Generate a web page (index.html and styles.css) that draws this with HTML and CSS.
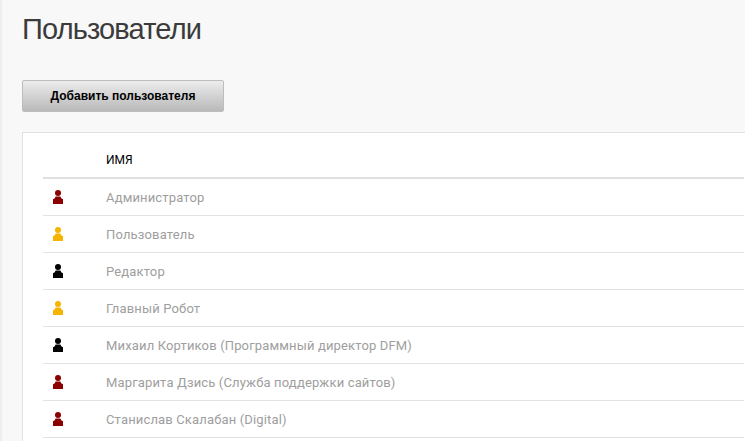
FILE: index.html
```html
<!DOCTYPE html>
<html lang="ru">
<head>
<meta charset="utf-8">
<title>Пользователи</title>
<link rel="stylesheet" href="styles.css">
</head>
<body>
<svg class="defs" width="0" height="0" aria-hidden="true"><defs>
<symbol id="user" viewBox="0 0 10 14"><circle cx="5" cy="3" r="3"/><path d="M2.6 6.6h4.8L8.2 8.2 10 9.2V14H0V9.2l1.8-1z"/></symbol>
</defs></svg>
<main class="page">
<h1 class="title">Пользователи</h1>
<button class="add" type="button">Добавить пользователя</button>
<section class="card">
<div class="head"><span class="icon-col"></span><span>ИМЯ</span></div>
<div class="row"><span class="icon-col"><svg class="user red"><use href="#user"/></svg></span><a class="name">Администратор</a></div>
<div class="row"><span class="icon-col"><svg class="user amber"><use href="#user"/></svg></span><a class="name">Пользователь</a></div>
<div class="row"><span class="icon-col"><svg class="user black"><use href="#user"/></svg></span><a class="name">Редактор</a></div>
<div class="row"><span class="icon-col"><svg class="user amber"><use href="#user"/></svg></span><a class="name">Главный Робот</a></div>
<div class="row"><span class="icon-col"><svg class="user black"><use href="#user"/></svg></span><a class="name">Михаил Кортиков (Программный директор DFM)</a></div>
<div class="row"><span class="icon-col"><svg class="user red"><use href="#user"/></svg></span><a class="name">Маргарита Дзись (Служба поддержки сайтов)</a></div>
<div class="row"><span class="icon-col"><svg class="user red"><use href="#user"/></svg></span><a class="name">Станислав Скалабан (Digital)</a></div>
</section>
</main>
</body>
</html>
```
FILE: styles.css
```css
html, body {
  margin: 0;
  height: 100%;
  overflow: hidden;
  background: #f8f8f8;
}
.defs { display: block; height: 0; }
.page {
  box-sizing: border-box;
  height: 441px;
  border-left: 2px solid #eeeeee;
  padding: 0 0 0 20px;
  overflow: hidden;
}
.title {
  margin: 0;
  padding-top: 13px;
  height: 80px;
  box-sizing: border-box;
  font: 400 29px/32px "Liberation Sans", Arial, sans-serif;
  letter-spacing: -0.85px;
  color: #3b3b3b;
}
.add {
  display: block;
  box-sizing: border-box;
  width: 202px;
  height: 32px;
  padding: 0;
  border: 1px solid #bdbdbd;
  border-radius: 2px;
  background: linear-gradient(#ececec, #b9b9b9);
  font: 700 12px/30px "Liberation Sans", Arial, sans-serif;
  color: #000;
}
.card {
  margin-top: 20px;
  margin-right: -20px;
  height: 320px;
  background: #fff;
  border: 1px solid #e2e2e2;
  padding: 0 20px;
}
.head, .row {
  display: flex;
  align-items: center;
  box-sizing: border-box;
}
.head {
  height: 46px;
  padding-top: 9px;
  border-bottom: 2px solid #e0e0e0;
  font: 400 12px/16px Roboto, sans-serif;
  color: #000;
}
.row {
  height: 37px;
  border-bottom: 1px solid #e2e2e2;
  font: 400 13px/16px Roboto, sans-serif;
  letter-spacing: 0.15px;
  color: #9e9e9e;
}
.name { padding-top: 2px; }
.icon-col {
  display: flex;
  width: 63px;
  padding-left: 10px;
  padding-bottom: 1px;
  box-sizing: border-box;
  flex: none;
}
.user { width: 10px; height: 14px; display: block; }
.red { fill: #8b0000; }
.amber { fill: #f5b400; }
.black { fill: #000; }
```
